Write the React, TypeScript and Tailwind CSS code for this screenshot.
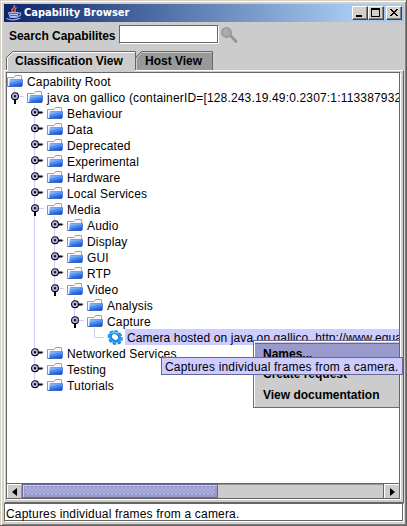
import React from "react";

type Node = { label: string; level: number; open?: boolean; leaf?: boolean };

const nodes: Node[] = [
  { label: "Capability Root", level: 0 },
  { label: "java on gallico (containerID=[128.243.19.49:0.2307:1:113387932", level: 1, open: true },
  { label: "Behaviour", level: 2 },
  { label: "Data", level: 2 },
  { label: "Deprecated", level: 2 },
  { label: "Experimental", level: 2 },
  { label: "Hardware", level: 2 },
  { label: "Local Services", level: 2 },
  { label: "Media", level: 2, open: true },
  { label: "Audio", level: 3 },
  { label: "Display", level: 3 },
  { label: "GUI", level: 3 },
  { label: "RTP", level: 3 },
  { label: "Video", level: 3, open: true },
  { label: "Analysis", level: 4 },
  { label: "Capture", level: 4, open: true },
  { label: "Camera hosted on java on gallico, http://www.equa", level: 5, leaf: true },
  { label: "Networked Services", level: 2 },
  { label: "Testing", level: 2 },
  { label: "Tutorials", level: 2 },
];

function Folder() {
  return (
    <svg width="16" height="16" viewBox="0 0 16 16" className="shrink-0">
      <defs>
        <linearGradient id="folderFront" x1="0" y1="0" x2="0.5" y2="1">
          <stop offset="0" stopColor="#a8d0ff" />
          <stop offset="0.45" stopColor="#5c98f4" />
          <stop offset="1" stopColor="#2458d8" />
        </linearGradient>
      </defs>
      <path d="M.5 13.500V4.500H7L8.500 2.500H14.500V13.500z" fill="#f4f6fc" stroke="#9aa2b6" />
      <path d="M.5 5V13.500" stroke="#6c98e0" />
      <path d="M3.500 6.500H15.500V13H2.500Z" fill="url(#folderFront)" />
      <path d="M15.500 6.500V12.500" stroke="#3c74dc" strokeWidth=".8" />
      <path d="M2.500 12.500L3.500 6.500H15.500" fill="none" stroke="#5890e8" strokeWidth=".8" />
      <path d="M1 13.500H15" stroke="#3468cc" />
    </svg>
  );
}

function Gear() {
  return (
    <svg width="16" height="16" viewBox="0 0 16 16" className="shrink-0">
      <g transform="rotate(38 8 8)" fill="none">
        <ellipse cx="8.500" cy="8.300" rx="6.800" ry="5.800" stroke="#0c74cc" strokeWidth="2.200" strokeDasharray="3.300 1.650" />
        <ellipse cx="8" cy="8" rx="6.400" ry="5.600" stroke="#2aa4f4" strokeWidth="2" strokeDasharray="3.100 1.610" />
        <ellipse cx="8" cy="8" rx="5" ry="4.200" stroke="#2098ee" strokeWidth="2.600" />
        <ellipse cx="8" cy="8" rx="3.900" ry="3.100" stroke="#0c6cc0" strokeWidth=".7" />
        <path d="M2.800 7.500Q4 3.500 8 3.500" stroke="#70ccff" strokeWidth="1.200" />
      </g>
    </svg>
  );
}

function Handle({ open }: { open?: boolean }) {
  return (
    <svg width="20" height="16" viewBox="0 0 20 16" className="shrink-0">
      <path d="M12 7.500h5" stroke="#ccccff" />
      <path d={open ? "M8 10v5" : "M11 7.500h4.500"} stroke="#000" strokeWidth="2" />
      <circle cx="8" cy="7.200" r="3.400" fill="#9999cc" stroke="#000" strokeWidth="1.100" />
      <circle cx="8" cy="7.200" r="2.300" fill="none" stroke="#c4c4ee" strokeWidth=".8" />
      <rect x="7" y="6.200" width="2" height="2" fill="#111133" />
    </svg>
  );
}

function Guides({ index }: { index: number }) {
  const n = nodes[index];
  return (
    <>
      {Array.from({ length: n.leaf ? 5 : Math.max(0, n.level - 1) }, (_, i) => {
        const level = i + 1;
        let continues = false;
        for (let j = index + 1; j < nodes.length; j++) {
          if (nodes[j].level < level) break;
          if (nodes[j].level === level) { continues = true; break; }
        }
        return (
          <svg key={i} width="20" height="16" viewBox="0 0 20 16" className="shrink-0">
            {continues && <path d="M7.500 0v16" stroke="#ccccff" />}
            {n.leaf && level === 5 && <path d="M7.500 0v8.500H17" fill="none" stroke="#ccccff" />}
          </svg>
        );
      })}
    </>
  );
}

function TreeRow({ index }: { index: number }) {
  const n = nodes[index];
  const next = nodes.slice(index + 1).find((m) => m.level <= n.level);
  const continues = next !== undefined && next.level === n.level;
  return (
    <div className="flex h-4 items-center tracking-[0.16px] whitespace-pre">
      <Guides index={index} />
      {n.level > 0 && !n.leaf && (
        <div className="flex h-4 w-5 shrink-0 bg-[linear-gradient(#ccccff,#ccccff)] bg-[length:1px_100%] bg-[position:7px_0] bg-no-repeat" style={continues ? undefined : { backgroundSize: "1px 50%" }}>
          <Handle open={n.open} />
        </div>
      )}
      {n.leaf ? <Gear /> : <Folder />}
      <div className={n.leaf ? "ml-[2px] h-4 w-[280px] shrink-0 bg-[#ccccff] pl-[2px] leading-[18px] tracking-[0.1px]" : "h-4 pl-1 leading-[18px]"}>{n.label}</div>
    </div>
  );
}

function JavaCup() {
  return (
    <svg width="16" height="16" viewBox="0 0 16 16" className="shrink-0">
      <path d="M8 0Q9.500 1.500 7 3.500T7.500 7M10.500 2.500Q8 4.500 9.500 7" fill="none" stroke="#f0684c" strokeWidth="1.500" />
      <path d="M2.500 7.500h9.500l-1 5H4z" fill="#5868b4" stroke="#b4bcec" strokeWidth=".9" />
      <path d="M4 9.500h7M4.500 11.500h6" stroke="#d0d4f4" strokeWidth=".8" />
      <path d="M12 8h2.500v2L11.500 12M.5 13.500Q7 16.500 14.500 13" fill="none" stroke="#a4aee4" strokeWidth="1.200" />
    </svg>
  );
}

function WinButton({ kind }: { kind: "min" | "max" | "close" }) {
  return (
    <div className="h-[14px] w-4 border border-t-white border-l-white border-r-[#404040] border-b-[#404040] bg-[#d4d0c8] shadow-[inset_-1px_-1px_#808080]">
      <svg width="14" height="12" viewBox="0 0 14 12" shapeRendering="crispEdges">
        {kind === "min" && <rect x="3" y="8" width="6" height="2" />}
        {kind === "max" && <path d="M2 1h9v9H2zM3 3v6h7V3z" fillRule="evenodd" />}
        {kind === "close" && <path d="M3 2h2v1h1v1h2V3h1V2h2v1h-1v1H9v1H8v1h1v1h1v1h1v1H9V8H8V7H6v1H5v1H3V8h1V7h1V6h1V5H5V4H4V3H3z" />}
      </svg>
    </div>
  );
}

export default function App() {
  return (
    <div className="relative flex h-[526px] w-[407px] flex-col overflow-hidden border-r border-b border-[#606060] bg-[#d4d0c8] pt-1 pr-[2px] pb-[2px] pl-1 font-['Liberation_Sans',Arial,sans-serif] text-xs text-black shadow-[inset_1px_1px_#d4d0c8,inset_2px_2px_#fff,inset_-1px_-1px_#808080]">
      <header className="flex h-[18px] w-[400px] shrink-0 items-center bg-[linear-gradient(to_right,#0a246a,#a6caf0_87%)] pr-[2px] pl-[2px]">
        <JavaCup />
        <h1 className="ml-[2px] font-['DejaVu_Sans_Condensed','DejaVu_Sans',sans-serif] text-[11px] leading-[18px] font-bold text-white">Capability Browser</h1>
        <div className="ml-auto flex">
          <WinButton kind="min" />
          <WinButton kind="max" />
          <div className="ml-[2px]"><WinButton kind="close" /></div>
        </div>
      </header>
      <main className="flex h-[481px] w-[400px] shrink-0 flex-col bg-[#cccccc]">
        <div className="flex h-[29px] shrink-0 pt-[3px] pl-[5px]">
          <label className="w-[110px] pt-[2px] leading-[18px] font-bold tracking-[-0.05px] whitespace-nowrap">Search Capabilites</label>
          <div className="h-[19px] w-[100px] border border-[#666] border-r-white border-b-white bg-white shadow-[inset_-1px_-1px_#666]" />
          <svg width="18" height="20" viewBox="0 0 18 20" className="ml-[2px]">
            <path d="M10 11l5 5.500" stroke="#949494" strokeWidth="2.700" strokeLinecap="round" />
            <circle cx="5.500" cy="7.500" r="4.800" fill="#a8a8a8" stroke="#949494" strokeWidth="1.300" />
            <path d="M3 7.500q0-2.500 2.500-2.500" fill="none" stroke="#b8b8b8" />
          </svg>
        </div>
        <div className="flex h-[19px] shrink-0 pl-[2px]">
          <div className="relative z-10 flex h-5 w-[130px] items-center">
            <svg width="130" height="20" viewBox="0 0 130 20" className="absolute inset-0">
              <path d="M.5 19V6.500L6.500.5H129.500V19" fill="#ccc" stroke="#666" />
              <path d="M1 18h128v2H1z" fill="#ccc" />
              <path d="M1.500 20V7L7 1.500H129" fill="none" stroke="#fff" />
            </svg>
            <span className="relative pl-[9px] font-bold tracking-[-0.04px] whitespace-nowrap">Classification View</span>
          </div>
          <div className="relative flex h-[19px] w-[77px] items-center">
            <svg width="77" height="19" viewBox="0 0 77 19" className="absolute inset-0">
              <path d="M0 19V6L5.500.5H76.500V19" fill="#999" stroke="#666" />
              <path d="M.5 19V7L6 1.500H76" fill="none" stroke="#ccc" />
            </svg>
            <span className="relative pt-px pl-[9px] font-bold whitespace-nowrap">Host View</span>
          </div>
        </div>
        <div className="h-[433px] w-[400px] shrink-0 border border-t-white border-r-[#666] border-b-[#666] border-l-white pt-px pr-[2px] pl-px">
          <section className="flex h-[427px] w-[394px] flex-col border border-[#666] shadow-[1px_1px_#fff]">
            <div className="h-[410px] shrink-0 overflow-hidden bg-white">
              {nodes.map((n, i) => <TreeRow key={n.label} index={i} />)}
            </div>
            <div className="flex h-[15px] shrink-0 border-t border-[#666] bg-[#ccc]">
              <div className="flex h-[14px] w-[15px] items-center justify-center border-t border-r border-l border-white border-r-[#999]">
                <svg width="5" height="8"><path d="M5 0v8L0 4z" /></svg>
              </div>
              <div className="h-[14px] w-[196px] border border-[#666699] bg-[#9999cc] p-[2px] shadow-[inset_1px_1px_#ccccff]">
                <div className="h-full bg-[radial-gradient(circle_at_1px_1px,#ccccff_.6px,transparent_.8px),radial-gradient(circle_at_3px_3px,#ccccff_.6px,transparent_.8px)] bg-[length:4px_4px]" />
              </div>
              <div className="h-[14px] flex-1 border-t border-[#999]" />
              <div className="flex h-[14px] w-[15px] items-center justify-center border-t border-l border-white shadow-[-1px_0_#666]">
                <svg width="5" height="8"><path d="M0 0v8l5-4z" /></svg>
              </div>
            </div>
          </section>
        </div>
      </main>
      <footer className="h-[19px] w-[400px] shrink-0 border border-[#666] border-r-white border-b-white bg-white pl-px leading-[20px] tracking-[0.18px] shadow-[inset_-1px_-1px_#666]">Captures individual frames from a camera.</footer>

      <div className="absolute top-[340px] left-[253px] h-[68px] w-[146px] overflow-hidden border border-r-0 border-[#666699] bg-[#ccc] font-bold shadow-[inset_1px_1px_#fff]">
        <div className="mt-[2px] ml-px h-[21px] border-t border-[#666699] bg-[#9999cc] pl-[8px] leading-[20px]">Names...</div>
        <div className="h-[21px] pl-[9px] leading-[21px]">Create request</div>
        <div className="h-[21px] pl-[9px] leading-[21px]">View documentation</div>
      </div>
      <div className="absolute top-[357px] left-[161px] h-[18px] w-[242px] border border-[#666699] bg-[#ccccff] pl-[3px] leading-[18px] tracking-[0.18px] whitespace-nowrap">Captures individual frames from a camera.</div>
    </div>
  );
}
